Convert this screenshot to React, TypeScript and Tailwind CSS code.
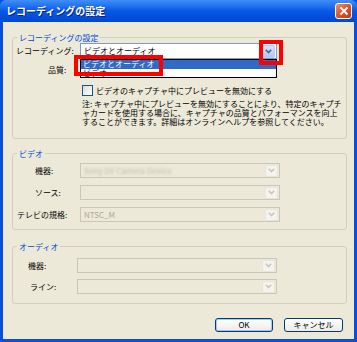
import React from 'react';

const font = "font-['Noto_Sans_CJK_JP','Noto_Sans',sans-serif]";

const Chevron = ({ color }: { color: string }) => (
  <svg width="7" height="5" viewBox="0 0 7 5">
    <path d="M0.8 0.8 L3.5 3.6 L6.2 0.8" fill="none" stroke={color} strokeWidth="1.5" />
  </svg>
);

const ComboBox = ({ text, width }: { text: string; width: string }) => (
  <div className={`${width} h-[16px] bg-white border border-[#7F9DB9] flex items-center pl-[3px] pr-[1px]`}>
    <span className="flex-1 text-[8px] leading-none whitespace-nowrap">{text}</span>
    <div className="w-[14px] h-[13px] rounded-[2px] border border-[#B9CBF3] bg-linear-to-b from-[#D6E3FE] to-[#B1C7F6] flex items-center justify-center">
      <Chevron color="#4D6185" />
    </div>
  </div>
);

const DisabledCombo = ({ children, width }: { children?: React.ReactNode; width: string }) => (
  <div className={`${width} h-[15px] border border-[#C9C7BA] flex items-center pl-[3px] pr-[1px]`}>
    <div className="flex-1 text-[8px] leading-none whitespace-nowrap text-[#ACA899]">{children}</div>
    <div className="w-[13px] h-[12px] rounded-[2px] bg-[#F4F3EE] border border-[#E8E6DC] flex items-center justify-center">
      <Chevron color="#C9C7BA" />
    </div>
  </div>
);

const Group = ({ title, className, children }: { title: string; className: string; children: React.ReactNode }) => (
  <div className={`relative border border-[#D0D0BF] rounded-[3px] ${className}`}>
    <span className="absolute -top-[6px] left-[4px] px-[2px] bg-[#ECE9D8] text-[#0046D5] text-[8px] leading-[11px]">
      {title}
    </span>
    {children}
  </div>
);

const Row = ({ label, pl, labelW, children, className = '' }: { label: string; pl: string; labelW: string; children: React.ReactNode; className?: string }) => (
  <div className={`flex items-center ${className}`}>
    <div className={`${labelW} ${pl} text-[8px] leading-none whitespace-nowrap`}>{label}</div>
    {children}
  </div>
);

export default function App() {
  return (
    <div className={`${font} w-[357px] h-[342px] bg-[#0A4EE0] flex flex-col px-[3px] pb-[3px] text-black`}>
      {/* Title bar */}
      <div className="h-[22px] -mx-[3px] px-[6px] flex items-center bg-linear-to-b from-[#3F8EF9] via-[#0858E6] to-[#0147D4] rounded-t-[6px]">
        <span className="flex-1 text-white font-bold text-[10px] leading-none [text-shadow:1px_1px_0_#0A246A]">
          レコーディングの設定
        </span>
        <div className="w-[17px] h-[16px] mr-[-1px] rounded-[3px] border border-white bg-linear-to-br from-[#EE8E68] via-[#DC5228] to-[#C13A12] flex items-center justify-center">
          <svg width="10" height="10" viewBox="0 0 10 10">
            <path d="M1.5 1.5 L8.5 8.5 M8.5 1.5 L1.5 8.5" stroke="white" strokeWidth="1.9" />
          </svg>
        </div>
      </div>

      {/* Client area */}
      <div className="flex-1 bg-[#ECE9D8] pt-[15px] pl-[9px] pr-[7px]">
        <Group title="レコーディングの設定" className="h-[102px]">
          <div className="pt-[5px]">
            <Row label="レコーディング:" pl="pl-[3px]" labelW="w-[67px]">
              <div className="relative">
                <ComboBox text="ビデオとオーディオ" width="w-[197px]" />
                {/* open list */}
                <div className="absolute left-0 top-full w-[197px] h-[19px] bg-white border border-black z-10 text-[8px] leading-[8.5px]">
                  <div className="h-[8.5px] bg-[#316AC5] text-white pl-[2px] whitespace-nowrap">ビデオとオーディオ</div>
                  <div className="h-[8.5px] pl-[2px] whitespace-nowrap">ビデオ</div>
                </div>
                {/* annotation boxes */}
                <div className="absolute -left-[6px] top-[12px] w-[89px] h-[21px] border-4 border-[#FF0000] z-20" />
                <div className="absolute left-[179px] -top-[3px] w-[24px] h-[25px] border-4 border-[#FF0000] z-20" />
              </div>
            </Row>
            <Row label="品質:" pl="pl-[35px]" labelW="w-[67px]" className="mt-[3px]">
              <div className="w-[197px] h-[16px] bg-white border border-[#7F9DB9]" />
            </Row>
            <div className="mt-[7px] pl-[69px] flex items-center">
              <div className="w-[11px] h-[11px] border border-[#1C5180] bg-linear-to-br from-[#DCDBD5] to-white" />
              <span className="ml-[3px] text-[8px] leading-none whitespace-nowrap">ビデオのキャプチャ中にプレビューを無効にする</span>
            </div>
            <div className="mt-[3px] pl-[69px] text-[8px] leading-[9px] whitespace-nowrap">
              <div>注: キャプチャ中にプレビューを無効にすることにより、特定のキャプチ</div>
              <div>ャカードを使用する場合に、キャプチャの品質とパフォーマンスを向上</div>
              <div>することができます。詳細はオンラインヘルプを参照してください。</div>
            </div>
          </div>
        </Group>

        <Group title="ビデオ" className="mt-[14px] h-[77px]">
          <div className="pt-[9px] flex flex-col gap-[7px]">
            <Row label="機器:" pl="pl-[22px]" labelW="w-[67px]">
              <DisabledCombo width="w-[200px]">
                <span className="blur-[0.8px] text-[#C3C0B0]">Sony DV Camera Device</span>
              </DisabledCombo>
            </Row>
            <Row label="ソース:" pl="pl-[22px]" labelW="w-[67px]">
              <DisabledCombo width="w-[200px]" />
            </Row>
            <Row label="テレビの規格:" pl="pl-[4px]" labelW="w-[67px]">
              <DisabledCombo width="w-[200px]">NTSC_M</DisabledCombo>
            </Row>
          </div>
        </Group>

        <Group title="オーディオ" className="mt-[16px] h-[58px]">
          <div className="pt-[11px] flex flex-col gap-[6px]">
            <Row label="機器:" pl="pl-[15px]" labelW="w-[64px]">
              <DisabledCombo width="w-[200px]" />
            </Row>
            <Row label="ライン:" pl="pl-[17px]" labelW="w-[64px]">
              <DisabledCombo width="w-[200px]" />
            </Row>
          </div>
        </Group>

        <div className="mt-[14px] mr-[4px] flex justify-end gap-[11px]">
          <button className="w-[58px] h-[14px] rounded-[3px] border border-[#003C74] bg-linear-to-b from-white to-[#ECEBE6] shadow-[inset_0_0_0_1px_#A9C6F3] text-[8px] leading-none">
            OK
          </button>
          <button className="w-[59px] h-[14px] rounded-[3px] border border-[#003C74] bg-linear-to-b from-white to-[#ECEBE6] text-[8px] leading-none">
            キャンセル
          </button>
        </div>
      </div>
    </div>
  );
}
